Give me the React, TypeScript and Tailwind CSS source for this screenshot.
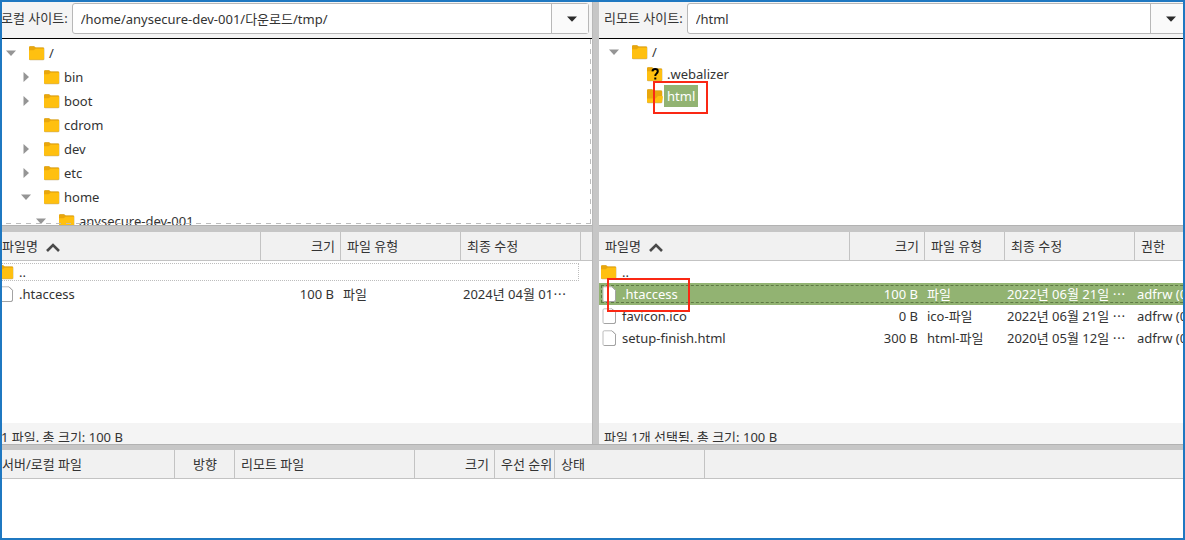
import type { ReactNode } from "react";

type Column = { label: string; col: string; align?: "right" | "center"; sorted?: boolean };
type FileRow = { icon: "folder" | "file"; name: string; cells: string[]; state?: "focused" | "selected"; marked?: boolean };

function FolderIcon({ open = false, unknown = false }: { open?: boolean; unknown?: boolean }) {
  return (
    <svg width="16" height="16" viewBox="0 0 16 16" className="shrink-0" aria-hidden="true">
      <path d="M0 2.8Q0 1.2 1.2 1.2H5L6.8 2.6H14Q15.4 2.6 15.4 3.8V14Q15.4 15.2 14 15.2H1.2Q0 15.2 0 14Z" fill="#c9b98f" />
      <path d="M0 2.2Q0 1.2 1 1.2H5L6.6 2.5H14Q15 2.5 15 3.5V13.6Q15 14.6 14 14.6H1Q0 14.6 0 13.6Z" fill="#e9a70c" />
      {open ? (
        <path d="M0 10.4H8.6L11 8H15Q16 8 15.9 9L15 13.6Q14.8 14.6 14 14.6H1Q0 14.6 0 13.6Z" fill="#ffc010" />
      ) : (
        <path d="M0 5.2H4.6L6.6 3.8H15V13.6Q15 14.6 14 14.6H1Q0 14.6 0 13.6Z" fill="#ffc010" />
      )}
      {unknown && (
        <path
          d="M5.4 5.4Q5.8 3 8.1 3Q10.8 3 10.8 5.3Q10.8 6.6 9.4 7.7Q8.3 8.5 8.3 10M8.3 11.4V13.6"
          fill="none"
          stroke="#000"
          strokeWidth="2"
        />
      )}
    </svg>
  );
}

function FileIcon() {
  return (
    <svg width="16" height="16" viewBox="0 0 16 16" className="shrink-0" aria-hidden="true">
      <path d="M3.2 0.8H11L14.5 4.3V14Q14.5 15.5 13 15.5H3.2Q2 15.5 2 14.2V2.1Q2 0.8 3.2 0.8Z" fill="#fff" stroke="#bcbcbc" />
      <path d="M11 0.8L14.5 4.3V14Q14.5 15.5 13 15.5H3.2" stroke="#a3a3a3" fill="none" />
    </svg>
  );
}

function Triangle({ open }: { open: boolean }) {
  return (
    <svg width="10" height="10" viewBox="0 0 10 10" aria-hidden="true">
      <path d={open ? "M0 2.5H10L5 8Z" : "M2.5 0L8 5L2.5 10Z"} fill="#959595" />
    </svg>
  );
}

function SiteBar({ id, label, value }: { id: string; label: string; value: string }) {
  return (
    <div className="flex h-[37px] items-start gap-1 border-b border-black bg-[#f4f4f4] pt-px pr-[3px] pl-[5px]">
      <label htmlFor={id} className="shrink-0 leading-[30px]">
        {label}
      </label>
      <div className="flex h-[31px] min-w-0 flex-1 rounded-[3px] border border-[#b8b8b8] bg-white">
        <input id={id} defaultValue={value} className="min-w-0 flex-1 bg-transparent px-2 pt-px outline-none" />
        <button aria-label={`${label} 목록`} className="flex w-[37px] shrink-0 items-center justify-center border-l border-[#b8b8b8] bg-[#fafafa] pl-1">
          <svg width="10" height="6" viewBox="0 0 10 6" aria-hidden="true">
            <path d="M0 0.5H10L5 5.8Z" fill="#2b2b2b" />
          </svg>
        </button>
      </div>
    </div>
  );
}

function Marker({ className }: { className: string }) {
  return <span className={`pointer-events-none absolute z-10 border-2 border-[#fa2814] ${className}`} />;
}

function Node({ level, expand, icon, height, children }: { level: string; expand?: "open" | "closed"; icon: ReactNode; height: string; children: ReactNode }) {
  return (
    <li className={`flex items-center ${height} ${level}`}>
      <span className="mr-[13px] flex w-[10px]">
        {expand && (
          <button aria-label={expand === "open" ? "접기" : "펼치기"}>
            <Triangle open={expand === "open"} />
          </button>
        )}
      </span>
      {icon}
      {children}
    </li>
  );
}

function LocalTree() {
  const nodes: { name: string; level: string; expand?: "open" | "closed" }[] = [
    { name: "/", level: "pl-[10px]", expand: "open" },
    { name: "bin", level: "pl-[25px]", expand: "closed" },
    { name: "boot", level: "pl-[25px]", expand: "closed" },
    { name: "cdrom", level: "pl-[25px]" },
    { name: "dev", level: "pl-[25px]", expand: "closed" },
    { name: "etc", level: "pl-[25px]", expand: "closed" },
    { name: "home", level: "pl-[25px]", expand: "open" },
    { name: "anysecure-dev-001", level: "pl-[40px]", expand: "open" },
  ];
  return (
    <div className="relative h-[186px] overflow-hidden bg-white pt-[2px]">
      <ul>
        {nodes.map((n) => (
          <Node key={n.name} level={n.level} expand={n.expand} height="h-6" icon={<FolderIcon />}>
            <span className="pl-1">{n.name}</span>
          </Node>
        ))}
      </ul>
      <div className="pointer-events-none absolute inset-x-0 bottom-px h-px bg-[repeating-linear-gradient(90deg,#bdbdbd_0_5px,transparent_5px_10px)]" />
      <div className="pointer-events-none absolute inset-y-0 right-px w-px bg-[repeating-linear-gradient(180deg,#bdbdbd_0_5px,transparent_5px_10px)]" />
    </div>
  );
}

function RemoteTree() {
  return (
    <div className="h-[186px] overflow-hidden bg-white pt-[2px]">
      <ul>
        <Node level="pl-[10px]" expand="open" height="h-[22px]" icon={<FolderIcon />}>
          <span className="pl-1">/</span>
        </Node>
        <Node level="pl-[25px]" height="h-[22px]" icon={<FolderIcon unknown />}>
          <span className="pl-1">.webalizer</span>
        </Node>
        <Node level="pl-[25px]" height="h-[22px]" icon={<FolderIcon open />}>
          <span className="relative ml-px h-[22px] bg-[#92b372] px-[3px] leading-[22px] text-white">
            html
            <Marker className="-top-1 -right-[10px] -bottom-[7px] -left-[11px]" />
          </span>
        </Node>
      </ul>
    </div>
  );
}

function alignClass(align?: "right" | "center") {
  return align === "right" ? "text-right" : align === "center" ? "text-center" : "text-left";
}

function Listing({ columns, rows, grow }: { columns: Column[]; rows: FileRow[]; grow: string }) {
  return (
    <div className={`flex items-start overflow-hidden bg-white ${grow}`}>
      <table className="w-0 shrink-0 table-fixed border-separate border-spacing-0">
        <colgroup>
          {columns.map((c) => (
            <col key={c.label} className={c.col} />
          ))}
        </colgroup>
        <thead>
          <tr className="h-[29px] bg-[#f1f1f1]">
            {columns.map((c) => (
              <th
                key={c.label}
                className={`overflow-hidden border-r border-b border-[#c3c3c3] pr-[5px] pl-[6px] font-normal whitespace-nowrap ${alignClass(c.align)}`}
              >
                {c.label}
                {c.sorted && (
                  <svg width="14" height="9" viewBox="0 0 14 9" className="ml-2 inline-block align-middle" aria-hidden="true">
                    <path d="M1 8L7 2L13 8" fill="none" stroke="#4a4a4a" strokeWidth="2.6" />
                  </svg>
                )}
              </th>
            ))}
          </tr>
        </thead>
        <tbody>
          {rows.map((r) => (
            <tr
              key={r.name}
              className={`h-[22px] ${
                r.state === "selected"
                  ? "bg-[#92b372] text-white outline-1 -outline-offset-3 outline-[#5f7a45] outline-dashed"
                  : r.state === "focused"
                    ? "outline-1 -outline-offset-3 outline-[#bdbdbd] outline-dotted"
                    : ""
              }`}
            >
              <td className="p-0 pl-[2px]">
                <div className="relative flex h-[22px] items-center gap-[5px]">
                  {r.icon === "folder" ? <FolderIcon /> : <FileIcon />}
                  <span>{r.name}</span>
                  {r.marked && <Marker className="-top-[5px] left-[6px] h-[34px] w-[83px]" />}
                </div>
              </td>
              {r.cells.map((text, i) => (
                <td key={i} className={`overflow-hidden p-0 pl-[2px] whitespace-nowrap ${i === 0 ? "pr-[7px]" : ""} ${alignClass(columns[i + 1].align)}`}>
                  {text}
                </td>
              ))}
            </tr>
          ))}
        </tbody>
      </table>
      <div className="h-[29px] flex-1 border-b border-[#c3c3c3] bg-[#f1f1f1]" />
    </div>
  );
}

const splitter = "h-[7px] border-t border-[#b2b2b2] bg-[#c6c6c6]";

function Status({ children }: { children: ReactNode }) {
  return (
    <div className="h-[21px] bg-[#f4f4f4] pb-[2px]">
      <p className="h-[19px] overflow-hidden pt-[3px] pl-[5px] leading-[22px]">{children}</p>
    </div>
  );
}

export default function App() {
  return (
    <main className="flex min-h-screen flex-col overflow-hidden border-2 border-[#1f78c1] bg-white font-['Noto_Sans','Noto_Sans_CJK_KR',sans-serif] text-[13px] leading-5 text-[#333333]">
      <div className="grid grid-cols-[590fr_7px_584fr]">
        <section className="-ml-[6px] min-w-0 overflow-hidden">
          <SiteBar id="local" label="로컬 사이트:" value="/home/anysecure-dev-001/다운로드/tmp/" />
          <LocalTree />
          <div className={splitter} />
          <Listing
            grow="h-[191px]"
            columns={[
              { label: "파일명", col: "w-[265px]", sorted: true },
              { label: "크기", col: "w-[80px]", align: "right" },
              { label: "파일 유형", col: "w-[120px]" },
              { label: "최종 수정", col: "w-[120px]" },
            ]}
            rows={[
              { icon: "folder", name: "..", cells: ["", "", ""], state: "focused" },
              { icon: "file", name: ".htaccess", cells: ["100 B", "파일", "2024년 04월 01⋯"] },
            ]}
          />
          <Status>1 파일. 총 크기: 100 B</Status>
        </section>
        <div className="border-l border-[#b8b8b8] bg-[#c6c6c6]" />
        <section className="min-w-0 overflow-hidden">
          <div className="-mr-2">
            <SiteBar id="remote" label="리모트 사이트:" value="/html" />
          </div>
          <RemoteTree />
          <div className={splitter} />
          <Listing
            grow="h-[191px]"
            columns={[
              { label: "파일명", col: "w-[251px]", sorted: true },
              { label: "크기", col: "w-[75px]", align: "right" },
              { label: "파일 유형", col: "w-[80px]" },
              { label: "최종 수정", col: "w-[130px]" },
              { label: "권한", col: "w-[100px]" },
            ]}
            rows={[
              { icon: "folder", name: "..", cells: ["", "", "", ""] },
              { icon: "file", name: ".htaccess", cells: ["100 B", "파일", "2022년 06월 21일 ⋯", "adfrw (0644)"], state: "selected", marked: true },
              { icon: "file", name: "favicon.ico", cells: ["0 B", "ico-파일", "2022년 06월 21일 ⋯", "adfrw (0644)"] },
              { icon: "file", name: "setup-finish.html", cells: ["300 B", "html-파일", "2020년 05월 12일 ⋯", "adfrw (0644)"] },
            ]}
          />
          <Status>파일 1개 선택됨. 총 크기: 100 B</Status>
        </section>
      </div>
      <div className="h-[6px] border-t border-[#b2b2b2] bg-[#c6c6c6]" />
      <section className="-ml-[6px]">
        <Listing
          grow=""
          columns={[
            { label: "서버/로컬 파일", col: "w-[179px]" },
            { label: "방향", col: "w-[60px]", align: "center" },
            { label: "리모트 파일", col: "w-[180px]" },
            { label: "크기", col: "w-[80px]", align: "right" },
            { label: "우선 순위", col: "w-[60px]" },
            { label: "상태", col: "w-[150px]" },
          ]}
          rows={[]}
        />
      </section>
    </main>
  );
}
